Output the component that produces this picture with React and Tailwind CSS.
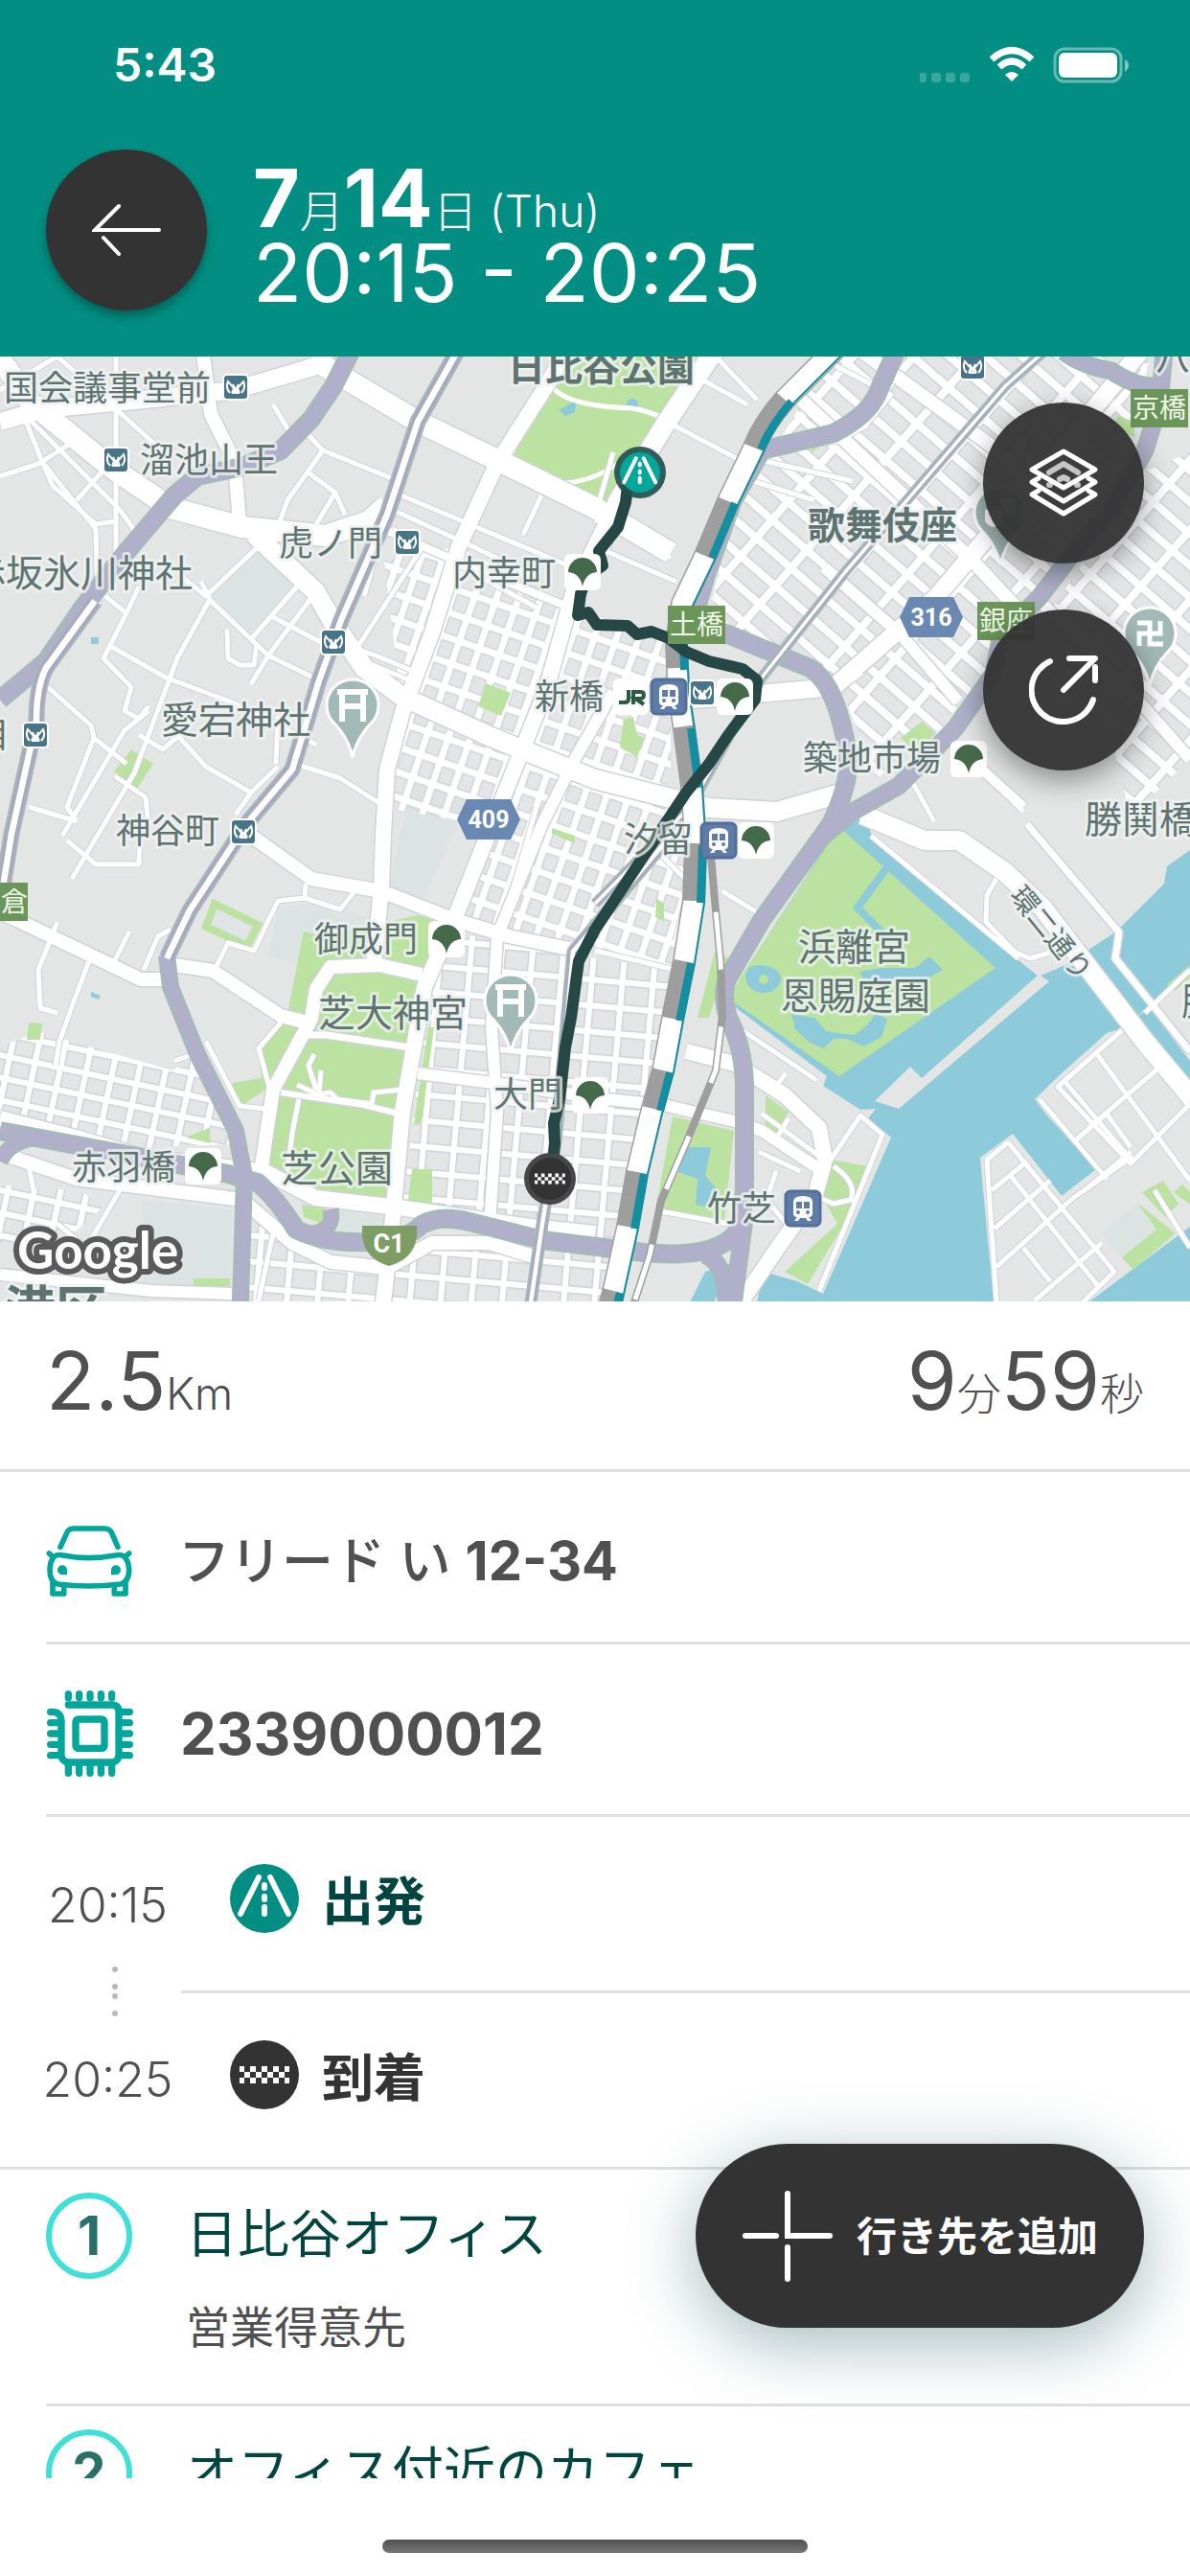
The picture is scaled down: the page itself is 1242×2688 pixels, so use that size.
import clsx from 'clsx';

const LAND_BLOCKS = [
  'M273 198 L312 240 L260 290 L222 250Z',
  'M430 440 L490 462 L440 570 L405 560Z',
  'M290 575 L330 570 L400 590 L320 640 L280 625Z',
  'M148 880 L242 890 V970 H150Z',
  'M351 891 L412 898 V925 L352 920Z',
  'M1187 883 L1207 911 L1171 940 L1150 915Z',
];

const WATER = [
  'M877 488 L906 488 L911 503 L1063 630 L1084 647 L1112 635 L1165 600 L1215 550 L1218 532 L1242 515 V640 L1191 685 L1171 701 L1155 706 L1108 748 L1080 775 L1092 791 L1144 848 L1108 876 L1057 811 L1023 836 L1037 987 H790 L797 955 L832 965 L859 978 L930 815 L906 795 L914 785 L898 786 L859 761 L863 751 L762 675 L771 651Z',
  'M1185 690 L1200 680 L1242 735 V765Z',
  'M1242 908 L1136 987 H1242Z',
  'M736 955 L764 946 L745 987 H720Z',
  'M880 488 L893 482 L905 485 V500 L890 505Z',
];

const PARKS = [
  'M570 32 L620 -2 H733 L691 68 L633 155 L535 106Z',
  'M507 341 L533 351 L523 375 L499 365Z',
  'M137 410 L160 425 L143 451 L119 433Z',
  'M317 600 L337 605 L436 583 L460 590 L440 645 L420 775 L412 871 L400 878 L329 868 L273 841 L277 765 L250 783 L242 758 L273 753 L269 718 L293 695 L301 681Z',
  'M430 848 H451 V888 H425Z',
  'M447 700 H453 L440 800 H432Z',
  'M194 815 L218 805 L220 821Z',
  'M30 695 L44 696 L42 713 H28Z',
  'M315 885 L341 888 L337 905 L317 898Z',
  'M876 491 L1039 638 L876 751 L762 671 L771 651Z',
  'M702 793 L766 808 L756 901 L684 891Z',
  'M746 621 L760 628 L740 690 H728Z',
  'M799 771 L823 788 L811 810 L799 806Z',
  'M867 838 L906 845 L890 890 L843 968 L819 955 L874 905 L859 878Z',
  'M1187 883 L1227 915 L1183 953 L1171 940 L1207 911Z',
  'M1225 872 L1234 864 L1242 872 V885Z',
  'M1192 872 L1214 860 L1230 884 L1216 898Z',
  'M1218 655 L1242 635 V648 L1226 662Z',
  'M847 88 L866 84 L847 101Z',
  'M651 378 L661 376 L665 395 L672 398 L665 418 L647 408Z',
  'M940 398 L962 381 L976 393 L958 415Z',
  'M576 492 L600 500 V508 L576 498Z',
  'M685 565 L693 571 L693 590 L684 585Z',
  'M202 962 H240 V970 H202Z',
  'M1166 62 L1184 68 V84 L1162 76Z',
  'M341 -2 H352 L346 10Z',
];

const PONDS = [
  'M778 648 Q778 634 795 635 Q815 638 815 650 Q812 664 795 664 Q780 662 778 648Z',
  'M826 686 L850 690 L862 704 L874 706 L892 708 L905 698 L915 684 L926 692 L920 710 L902 720 L884 712 L870 712 L860 722 L845 716 L830 702Z',
  'M897 642 L920 638 L955 638 L970 626 L984 640 L966 650 L940 648 L922 656 L900 648Z',
  'M716 825 H742 L736 855 L750 871 L740 888 L726 885 L728 858 L708 851Z',
  'M583 56 L602 45 L600 58 L590 62Z',
  'M654 50 a6 6 0 1 0 12 0 a6 6 0 1 0 -12 0Z',
  'M95 293 h8 v7 h-8Z',
  'M95 663 l10 4 -2 4 -8 -3Z',
];

// Blocks of regular streets, each filled with a rotated street pattern
const GRIDS = [
  { fill: 'url(#streets-ginza)', d: 'M830 60 L872 -2 H1200 L1180 100 L1100 240 L1035 320 L980 390 L915 440 L875 340 L795 300 L740 270 L760 180Z' },
  { fill: 'url(#streets-ginza)', d: 'M1100 260 L1195 120 L1242 100 V420 L1180 480 L1160 400 L1120 340Z' },
  { fill: 'url(#streets-shimbashi)', d: 'M400 205 L480 200 L621 270 L700 300 L700 440 L600 620 L530 605 L470 580 L510 490 L400 470 L420 371Z' },
  { fill: 'url(#streets-shimbashi)', d: 'M640 440 L720 470 L725 560 L700 640 L600 620Z' },
  { fill: 'url(#streets-daimon)', d: 'M600 625 L705 640 L670 850 L640 987 H252 L260 885 L345 950 L400 930 L580 930 L420 890 L455 600 L594 618Z' },
  { fill: 'url(#streets-azabu)', d: 'M0 720 L40 705 L180 745 L205 730 L245 822 L150 825 L0 785Z' },
  { fill: 'url(#streets-azabu)', d: 'M0 865 L80 870 L110 885 L60 930 L0 925Z' },
];

const MINOR_ROADS = [
  'M121 -2 V230', 'M22 55 L44 110 L100 180 L102 260', 'M30 65 L125 160 L150 195', 'M0 125 L40 112 L75 90',
  'M45 112 L55 135 L100 175 L120 172', 'M0 15 L40 60 M0 35 L60 0', 'M60 0 L160 90', 'M80 150 L120 105',
  'M285 50 L306 85 L320 75 M320 80 L337 98 L411 128', 'M337 98 L300 150 L290 178', 'M320 120 L350 142 L330 175',
  'M350 142 L360 165', 'M419 145 L490 175 L621 230', 'M414 162 L480 192 L560 230', 'M410 180 L560 262',
  'M565 145 L546 186', 'M273 195 L215 250 L190 230', 'M210 235 L220 255 L262 295 L280 312 L333 338', 'M218 255 L185 315 L140 435 L75 545',
  'M310 240 L262 295', 'M110 250 L132 268 L145 240', 'M132 268 L108 315 L137 345 L130 370 L145 378 L155 365', 'M115 302 L173 335 L240 360 L330 405',
  'M262 342 L280 312 L330 245', 'M285 272 L348 305', 'M50 345 L95 385 L98 398 L132 425', 'M65 500 L130 390 L155 370',
  'M98 398 L70 470 L80 485', 'M30 470 L80 485', 'M185 395 L215 428 L262 455 L290 428', 'M120 438 L152 460 L155 490',
  'M145 395 L170 410 L185 397', 'M237 285 L238 315 L250 322 L265 322 L268 300', 'M308 425 L355 440 L402 470', 'M348 305 L433 340 M372 305 L392 312 L433 329',
  'M405 160 L380 250', 'M440 200 L372 305', 'M290 375 L288 425 M262 455 L246 478', 'M70 505 L100 530 L145 530 L146 500',
  'M319 550 L318 565 L290 568 L265 620 L238 612 L224 640', 'M318 565 L355 577 L370 558', 'M93 631 L78 670 L62 715 L58 740',
  'M60 590 L40 640 L42 680 L60 685', 'M120 630 L135 600 M150 640 L165 605 L178 598', 'M215 715 L250 782 L277 785',
  'M293 695 L270 722 L283 770', 'M182 735 L205 727', 'M560 470 L520 610', 'M621 170 L700 210 M625 200 L706 235 M640 100 L620 170',
  'M696 68 L772 108', 'M725 20 L780 50 M745 -2 L790 45', 'M787 101 L874 88 L906 71', 'M850 -2 L930 40 L905 70',
  'M780 105 L890 130 M770 125 L850 150', 'M985 391 L1068 475', 'M920 450 L950 440 L975 485', 'M795 345 L874 348 L900 330',
  'M1040 545 L1030 562 L1029 590 L1060 622 L1075 628 L1096 622', 'M909 500 L1063 628', 'M754 558 L790 580', 'M670 500 L720 550 L705 610',
  'M621 620 L705 640', 'M1195 685 L1242 640', 'M1171 703 L1104 762 L1180 842 L1242 780', 'M1145 728 L1242 860', 'M1110 755 L1182 840',
  'M1136 805 L1210 742', 'M1120 820 L1155 790 L1180 825', 'M1085 775 L1155 858', 'M1242 930 L1205 870 M1135 868 L1180 830',
  'M1052 820 L1030 838 L1040 987', 'M1052 820 L1163 955 L1130 987', 'M1035 870 L1072 840', 'M1038 910 L1096 860',
  'M1040 950 L1120 878 L1182 835', 'M1080 985 L1150 925', 'M1055 855 L1146 970', 'M1068 930 L1096 965',
  'M867 838 L898 792 L921 812 L855 975', 'M870 845 Q895 862 888 880 L870 884 L850 876', 'M860 838 L795 790',
  'M770 700 L852 755 M811 760 L820 748', 'M792 830 L835 850 M823 795 L811 815', 'M810 850 L800 880 L825 910 L815 930', 'M684 891 L760 905',
  'M255 885 L250 905 M285 915 L270 985', 'M30 845 L35 870 M60 905 L90 930 L125 870', 'M310 760 L332 770 L345 768 L352 775 L388 780 L390 768 L420 765',
  'M328 728 L322 740 L330 765 M335 745 L333 768', 'M312 775 L305 810 L300 850',
];

const MAIN_ROADS = [
  { w: 18, d: 'M0 68 L45 55 L150 45 L245 35 L330 10 L340 -5' },
  { w: 22, d: 'M-5 -5 L32 48 L115 115 L178 158 L253 178 L340 187 L385 172 L404 155' },
  { w: 14, d: 'M212 -2 L220 60 L245 110 L250 175' },
  { w: 22, d: 'M325 2 L436 68 L519 108 L621 158 L700 205' },
  { w: 8, d: 'M400 180 L480 215 L590 260' },
  { w: 20, d: 'M265 185 L329 245 L348 278 L380 325 L420 355 L515 398 L621 441 L740 471 L811 475 L880 455' },
  { w: 16, d: 'M590 -5 L570 31 L519 111 L479 198 L451 288 L420 371 L404 431 L400 498 L398 555 L390 635' },
  { w: 16, d: 'M640 160 L600 240 L570 348 L527 455 L507 505 L475 585 L443 658 L420 788 L410 898 L400 987' },
  { w: 12, d: 'M640 350 L600 420 L566 488 L519 605 L513 700 L519 788 L511 905' },
  { w: 14, d: 'M262 500 L325 545 L398 558 L475 588 L531 605 L594 618' },
  { w: 14, d: 'M0 580 L24 591 L147 650 L170 650 L182 635 L222 641 L293 688 L321 695' },
  { w: 16, d: 'M0 795 L79 815 L147 835 L253 848 L277 851 L329 878 L416 888 L554 908 L621 915' },
  { w: 14, d: 'M0 831 L79 858 L253 880 L305 925 L345 945 L404 951 L451 925 L511 925 L562 941' },
  { w: 14, d: 'M440 645 L396 635 L345 637 L330 660 L325 691 L285 765 L273 845' },
  { w: 7, d: 'M321 708 L341 708 L428 721' },
  { w: 6, d: 'M293 768 L380 781 L420 791' },
  { w: 12, d: 'M436 748 L515 758 L633 775 L692 781 L767 798 L795 808 L855 848' },
  { w: 16, d: 'M716 725 L767 738 L819 771 L855 805 L861 838 L851 875 L811 931 L771 990' },
  { w: 20, d: 'M900 478 L965 505 L1001 505 L1049 538 L1088 575 L1136 638 L1195 715 L1245 775' },
  { w: 7, d: 'M1072 488 L1168 601 L1164 628 L1242 725' },
  { w: 12, d: 'M0 958 L158 975 L242 978' },
  { w: 20, d: 'M745 -5 L696 68 L645 151 L622 210' },
  { w: 14, d: 'M820 30 L882 88 L1017 215 L1068 270' },
  { w: 14, d: 'M900 -5 L1041 98 L1120 190' },
  { w: 18, d: 'M700 360 L870 345 L977 251 L1080 130 L1190 -5' },
  { w: 12, d: 'M860 220 L940 290 L1000 360' },
  { w: 12, d: 'M1080 250 L1180 350 L1242 420' },
  { w: 10, d: 'M980 390 L1068 470' },
];

// Expressways are solid, underground lines carry a white core
const EXPRESSWAYS = [
  { w: 15, d: 'M366 -5 L348 31 L325 65 L293 98 L253 115 L206 125 L182 145 L131 205 L87 261 L48 318 L0 358' },
  { w: 15, d: 'M0 808 L91 825 L238 853 L269 862 Q290 880 309 911 Q340 926 385 924 Q425 922 440 906 Q460 895 490 903 L566 922 L672 935 Q745 942 768 915 Q777 895 777 860 L777 760 Q776 720 760 690 Q752 665 760 648 L795 588 L867 488 Q890 440 884 410 Q872 340 845 325 L760 290 L722 280 L737 228 L765 150 L795 98 L870 80 Q905 62 915 40 L935 -5' },
  { w: 14, d: 'M860 500 L890 475 L938 448 L997 388 L1037 331 L1045 290 L1085 251 L1120 205 L1160 160 L1195 98 L1210 50 L1215 -5' },
  { w: 12, d: 'M0 840 Q10 818 40 815' },
  { w: 12, d: 'M345 890 Q350 912 325 915' },
  { w: 14, d: 'M1110 -5 Q1130 10 1160 15 Q1190 35 1212 30' },
  { w: 14, d: 'M735 937 Q758 945 758 990 M777 900 L765 990' },
  { w: 13, d: 'M174 625 L178 658 L206 728 L246 808 L255 855 L251 987' },
];

const SUBWAYS = [
  { w: 13, d: 'M99 255 L48 325 Q38 345 38 380 L12 498 L2 560' },
  { w: 13, d: 'M477 -5 L436 68 L404 165 L356 275 L333 338 L305 431 L257 488 L198 578 L174 628' },
  { w: 7, d: 'M1095 -10 L1049 31 L882 225 L795 335 L720 470 L621 571' },
  { w: 9, d: 'M700 500 L598 621 L580 820 L566 905 L554 987' },
];

const MAIN_LINE = 'M872 -8 L819 45 Q797 70 787 95 L760 151 L736 208 L712 258 L706 298 L708 348 L714 388 L722 448 L726 511 L724 568 L714 631 L702 691 L692 745 L680 788 L665 851 L655 908 L637 990';
const MAIN_LINE_DARK = 'M819 45 Q797 70 787 95 M760 151 L736 208 M706 298 L707 325 M714 386 L722 448 M726 508 L724 568 M714 631 L702 691 M692 745 L682 785 M665 851 L655 908 M640 975 L636 990';
const MONORAIL = 'M742 520 L746 568 L752 631 L754 688 L747 745 L716 821 L690 881 L678 938 L661 990';
const ROUTE = 'M655 135 L653 152 L645 178 L625 203 L629 218 L612 230 L606 248 L603 270 L614 267 L623 280 L655 281 L665 290 L680 287 L698 294 L716 308 L740 318 L775 326 L790 338 L788 358 L760 395 L740 425 L716 455 L692 491 L621 598 L604 631 L596 690 L590 721 L584 775 L578 800 L579 821 L576 850';

const LABELS = [
  { t: '国会議事堂前', x: 4, y: 46 },
  { t: '溜池山王', x: 146, y: 121 },
  { t: '虎ノ門', x: 291, y: 208 },
  { t: '赤坂氷川神社', x: -33, y: 240, lg: true },
  { t: '内幸町', x: 472, y: 239 },
  { t: '愛宕神社', x: 168, y: 393, lg: true },
  { t: '目', x: -26, y: 408 },
  { t: '新橋', x: 558, y: 368 },
  { t: '神谷町', x: 121, y: 508 },
  { t: '日比谷公園', x: 530, y: 25, lg: true, bold: true },
  { t: '歌舞伎座', x: 843, y: 190, lg: true, bold: true },
  { t: '八', x: 1206, y: 14 },
  { t: '築地市場', x: 838, y: 432 },
  { t: '汐留', x: 651, y: 517 },
  { t: '勝鬨橋', x: 1132, y: 497, lg: true },
  { t: '勝', x: 1233, y: 687, lg: true },
  { t: '御成門', x: 328, y: 621 },
  { t: '芝大神宮', x: 332, y: 699, lg: true },
  { t: '大門', x: 515, y: 783 },
  { t: '赤羽橋', x: 75, y: 859 },
  { t: '芝公園', x: 293, y: 861, lg: true },
  { t: '浜離宮', x: 833, y: 630, lg: true },
  { t: '恩賜庭園', x: 815, y: 681, lg: true },
  { t: '竹芝', x: 738, y: 902 },
];

const METRO_STOPS = [[246, 32], [121, 108], [425, 194], [348, 298], [37, 395], [254, 496], [733, 351], [1015, 11]];
const TRAIN_STOPS = [[698, 355], [750, 505], [838, 889]];
const TOEI_STOPS = [[608, 225], [767, 355], [1011, 420], [789, 505], [466, 608], [616, 771], [212, 845]];

const RAMPS = [
  { t: '京橋', x: 1180, y: 34 },
  { t: '銀座', x: 1020, y: 256 },
  { t: '土橋', x: 697, y: 260 },
  { t: '倉', x: -1, y: 549, w: 30 },
];

const MetroStop = ({ x, y }) => (
  <g transform={`translate(${x} ${y})`}>
    <rect x="-14" y="-14" width="28" height="28" rx="5" fill="#fff" />
    <rect x="-12" y="-12" width="24" height="24" rx="3" fill="#477487" />
    <path
      d="M-6 6 Q-11 1 -8 -6 L-2 1 L-4 6 M6 6 Q11 1 8 -6 L2 1 L4 6 M-3 -3 Q0 4 4 6 H-4 Q0 4 3 -3"
      fill="none"
      stroke="#fff"
      strokeWidth="2"
    />
  </g>
);

const TrainStop = ({ x, y }) => (
  <g transform={`translate(${x} ${y})`}>
    <rect x="-18" y="-18" width="36" height="36" rx="5" fill="#5f7ca6" stroke="#536f9b" strokeWidth="3" />
    <path d="M-10 -7 Q-10 -13 0 -13 Q10 -13 10 -7 V5 Q10 9 6 9 L9 13 H5 L3 10 H-3 L-5 13 H-9 L-6 9 Q-10 9 -10 5Z" fill="#fff" />
    <path d="M-7 -7 H-1 V0 H-7Z M1 -7 H7 V0 H1Z" fill="#5f7ca6" />
    <circle cx="-5" cy="4" r="2" fill="#5f7ca6" />
    <circle cx="5" cy="4" r="2" fill="#5f7ca6" />
  </g>
);

const ToeiStop = ({ x, y }) => (
  <g transform={`translate(${x} ${y})`}>
    <rect x="-19" y="-19" width="38" height="38" rx="6" fill="#fff" />
    <path d="M-15 0 A15 15 0 0 1 15 0 Q3 1 0 15 Q-3 1 -15 0Z" fill="#456a4a" />
  </g>
);

const PlacePin = ({ x, y, children }) => (
  <g transform={`translate(${x} ${y})`}>
    <path
      d="M0 55 Q-4 36 -18 21 A27 27 0 1 1 18 21 Q4 36 0 55Z"
      fill="#a2bab7"
      stroke="#fff"
      strokeWidth="3"
    />
    {children}
  </g>
);

const Torii = () => (
  <path d="M-16 -13 H16 M-11 -13 V18 M11 -13 V18 M-11 2 H11" fill="none" stroke="#fff" strokeWidth="6" />
);

const RoadGlyph = () => (
  <path
    d="M30 14 L11 52 M42 14 L61 52 M36 22 V25 M36 34 V37 M36 45 V52"
    fill="none"
    stroke="#fff"
    strokeWidth="6"
    strokeLinecap="round"
  />
);

const FlagGlyph = () => (
  <path
    d="M10 27h5v6h-5z M21 27h6v6h-6z M33 27h6v6h-6z M45 27h6v6h-6z M57 27h5v6h-5z M15 33h6v6h-6z M27 33h6v6h-6z M39 33h6v6h-6z M51 33h6v6h-6z M10 39h5v6h-5z M21 39h6v6h-6z M33 39h6v6h-6z M45 39h6v6h-6z M57 39h5v6h-5z"
    fill="#fff"
  />
);

const StreetPattern = ({ id, w, h, angle, line }) => (
  <pattern id={id} width={w} height={h} patternUnits="userSpaceOnUse" patternTransform={`rotate(${angle})`}>
    <path d={`M0 0 H${w} M0 0 V${h} M0 ${h} H${w} M${w} 0 V${h}`} stroke="#d0d2da" strokeWidth={line + 3} />
    <path d={`M0 0 H${w} M0 0 V${h} M0 ${h} H${w} M${w} 0 V${h}`} stroke="#fff" strokeWidth={line} />
  </pattern>
);

const RouteMap = () => (
  <svg
    className="block w-full h-full font-['Noto_Sans_CJK_JP','Noto_Sans',sans-serif]"
    viewBox="0 0 1242 986"
    preserveAspectRatio="xMidYMid slice"
    role="img"
    aria-label="走行ルート"
  >
    <defs>
      <StreetPattern id="streets-ginza" w={48} h={25} angle={41} line={8} />
      <StreetPattern id="streets-shimbashi" w={22} h={25} angle={19} line={7} />
      <StreetPattern id="streets-daimon" w={32} h={27} angle={5} line={6} />
      <StreetPattern id="streets-azabu" w={27} h={23} angle={12} line={6} />
    </defs>

    <rect width="1242" height="986" fill="#e4e6e6" />
    {LAND_BLOCKS.map((d) => <path key={d} d={d} fill="#dce3e3" />)}
    {WATER.map((d) => <path key={d} d={d} fill="#8ecbda" />)}
    <path d="M1084 645 L1095 652 L938 785 L913 777 L950 741 L962 753Z" fill="#e4e6e6" />
    {GRIDS.map(({ fill, d }) => <path key={d} d={d} fill={fill} />)}
    {PARKS.map((d) => <path key={d} d={d} fill="#bbe2a0" />)}
    <path d="M224 571 L269 593 L258 615 L215 595Z" fill="#e0e4e6" stroke="#bbe2a0" strokeWidth="8" />
    {PONDS.map((d) => <path key={d} d={d} fill="#8ecbda" />)}
    <circle cx="797" cy="650" r="5" fill="#bbe2a0" />
    <path d="M926 533 L895 575 L926 607" fill="none" stroke="#8ecbda" strokeWidth="8" />
    <path d="M575 30 Q590 52 660 54 Q690 60 700 70 M580 131 Q610 135 645 112" fill="none" stroke="#fff" strokeWidth="5" />

    <g fill="none" strokeLinejoin="round">
      {MINOR_ROADS.map((d) => <path key={d} d={d} stroke="#d0d2da" strokeWidth="7" />)}
      {MAIN_ROADS.map(({ w, d }) => <path key={d} d={d} stroke="#d0d2da" strokeWidth={w + 3} />)}
      {MINOR_ROADS.map((d) => <path key={d} d={d} stroke="#fff" strokeWidth="5" />)}
      {MAIN_ROADS.map(({ w, d }) => <path key={d} d={d} stroke="#fff" strokeWidth={w} />)}

      {EXPRESSWAYS.map(({ w, d }) => <path key={d} d={d} stroke="#a5bab8" strokeWidth={w + 5} />)}
      {EXPRESSWAYS.map(({ w, d }) => <path key={d} d={d} stroke="#b0b0ca" strokeWidth={w} />)}
      {SUBWAYS.map(({ w, d }) => <path key={d} d={d} stroke="#a5bab8" strokeWidth={w + 4} />)}
      {SUBWAYS.map(({ w, d }) => <path key={d} d={d} stroke="#a9a8c0" strokeWidth={w} />)}
      {SUBWAYS.map(({ w, d }) => <path key={d} d={d} stroke="#fff" strokeWidth={w / 2} />)}

      <path d={MONORAIL} stroke="#9e9e9e" strokeWidth="8" />
      <path d={MONORAIL} stroke="#fff" strokeWidth="5" strokeDasharray="60 60" strokeDashoffset="60" />
      <path d={MAIN_LINE} stroke="#9e9e9e" strokeWidth="24" />
      <path d={MAIN_LINE} stroke="#fff" strokeWidth="21" />
      <path d={MAIN_LINE_DARK} stroke="#9e9e9e" strokeWidth="23" />
      <g transform="translate(7 2)">
        <path d={MAIN_LINE} stroke="#148ea0" strokeWidth="2" transform="translate(4 0)" />
        <path d={MAIN_LINE_DARK} stroke="#148ea0" strokeWidth="8" />
      </g>
    </g>

    <path d={ROUTE} fill="none" stroke="#254846" strokeWidth="12" strokeLinejoin="round" />

    <g fill="#5f7370" stroke="#eef2f1" strokeWidth="6" strokeOpacity="0.8" strokeLinejoin="round" paintOrder="stroke">
      {LABELS.map(({ t, x, y, lg, bold }) => (
        <text key={t + x} x={x} y={y} fontSize={lg ? 39 : 36} fontWeight={bold ? 700 : 400}>{t}</text>
      ))}
      <text x="4" y="1015" fontSize="54" fontWeight="700">港区</text>
      <text fontSize="29" textAnchor="middle" transform="translate(1089 608) rotate(51)">環二通り</text>
    </g>

    {METRO_STOPS.map(([x, y]) => <MetroStop key={`${x}-${y}`} x={x} y={y} />)}
    <rect x="640" y="336" width="37" height="38" rx="6" fill="#fff" />
    <path
      d="M656 348 V357 Q656 361 652 361 H646 M661 363 V350 H668 Q672 350 672 353 Q672 357 668 357 H663 L672 363"
      fill="none"
      stroke="#2c5a45"
      strokeWidth="4"
    />
    {TRAIN_STOPS.map(([x, y]) => <TrainStop key={`${x}-${y}`} x={x} y={y} />)}
    {TOEI_STOPS.map(([x, y]) => <ToeiStop key={`${x}-${y}`} x={x} y={y} />)}

    <PlacePin x={368} y={363}><Torii /></PlacePin>
    <PlacePin x={533} y={671}><Torii /></PlacePin>
    <PlacePin x={1200} y={288}>
      <path d="M-13 -10 H0 V12 H14 M-11 14 V1 H11 V-12" fill="none" stroke="#fff" strokeWidth="5" />
    </PlacePin>
    <PlacePin x={1044} y={162}>
      <path d="M-16 -2 H2 V10 Q-7 22 -16 10Z M0 -14 H16 V0 Q10 6 4 0" fill="#fff" />
    </PlacePin>

    {RAMPS.map(({ t, x, y, w = 60 }) => (
      <g key={t}>
        <rect x={x} y={y} width={w} height="40" fill="#6b9559" />
        <text x={x + 2} y={y + 30} fontSize="28" fill="#eef7e8">{t}</text>
      </g>
    ))}

    <g className="font-['Roboto',sans-serif]" fill="#fff" fontSize="27" fontWeight="700" textAnchor="middle">
      <path d="M487 462 H533 L543 483 L533 504 H487 L477 483Z" fill="#6a89b2" />
      <text x="510" y="492" fontSize="25">409</text>
      <path d="M949 251 H995 L1005 272 L995 293 H949 L939 272Z" fill="#6a89b2" />
      <text x="972" y="281" fontSize="25">316</text>
      <path d="M378 907 H435 V918 Q432 942 406 949 Q381 942 378 918Z" fill="#7c9d63" />
      <text x="406" y="935">C1</text>
    </g>

    <circle cx="668" cy="121" r="27" fill="#244f4d" fillOpacity="0.92" />
    <circle cx="668" cy="121" r="21" fill="#00a79a" />
    <g transform="translate(644 97) scale(0.66)"><RoadGlyph /></g>
    <circle cx="574" cy="858" r="27" fill="#474747" />
    <circle cx="574" cy="858" r="22" fill="#333" />
    <g transform="translate(552 836) scale(0.61)"><FlagGlyph /></g>

    <text
      className="font-['Lato',sans-serif]"
      x="18"
      y="952"
      fontSize="53"
      fontWeight="700"
      fill="#fff"
      stroke="#5a5a5a"
      strokeWidth="12"
      strokeLinejoin="round"
      paintOrder="stroke"
    >
      Google
    </text>
  </svg>
);

const StatusBar = () => (
  <div className="flex items-center justify-between h-[136px] pl-[118px] pr-15">
    <span className="text-5xl font-semibold">5:43</span>
    <svg className="w-[222px] h-10" viewBox="0 0 222 40" fill="#fff" aria-hidden="true">
      <g opacity="0.22">
        <rect x="-3" y="28" width="10" height="10" rx="3" />
        <rect x="12" y="28" width="10" height="10" rx="3" />
        <rect x="27" y="28" width="10" height="10" rx="3" />
        <rect x="42" y="28" width="10" height="10" rx="3" />
      </g>
      <path d="M96 37 L89 30 Q96 24 103 30Z" />
      <path d="M83 22 Q96 10 109 22 M75 14 Q96 -5 117 14" fill="none" stroke="#fff" strokeWidth="7" />
      <rect x="141" y="3" width="69" height="34" rx="10" fill="none" stroke="#fff" strokeWidth="3" opacity="0.4" />
      <rect x="145" y="7" width="61" height="26" rx="6" />
      <path d="M214 14 Q218 16 218 20 Q218 24 214 27Z" opacity="0.5" />
    </svg>
  </div>
);

const RoundButton = ({ label, className, children }) => (
  <button
    type="button"
    aria-label={label}
    className={clsx('flex shrink-0 items-center justify-center size-[168px] rounded-full', className)}
  >
    {children}
  </button>
);

const Header = () => (
  <header className="shrink-0 bg-[#028e82] text-white">
    <StatusBar />
    <div className="flex items-start px-12 pt-5 pb-12">
      <RoundButton label="戻る" className="bg-[#333] shadow-[0_6px_10px_rgba(0,0,0,0.3)]">
        <svg className="w-[72px] h-[58px]" viewBox="0 0 72 58" fill="none" stroke="#fff" strokeWidth="4" strokeLinecap="round">
          <path d="M70 29 H3 L28 4 M12 37 L28 54" />
        </svg>
      </RoundButton>
      <h1 className="pl-12 pt-3">
        <span className="flex items-baseline h-[78px] text-[46px] leading-[78px] font-light">
          <b className="text-[84px] font-bold">7</b>月
          <b className="text-[84px] font-bold">14</b>日 (Thu)
        </span>
        <span className="block h-[78px] text-[84px] leading-[78px] font-normal">20:15 - 20:25</span>
      </h1>
    </div>
  </header>
);

const MapSection = () => (
  <section className="relative w-full shrink-0 aspect-[1242/986] overflow-hidden">
    <RouteMap />
    <div className="absolute top-12 right-12 flex flex-col gap-12">
      <RoundButton label="地図の種類" className="bg-[#333]/95 shadow-[0_10px_30px_rgba(0,0,0,0.4)]">
        <svg className="size-[72px]" viewBox="0 0 72 72" fill="none" strokeLinecap="round" strokeLinejoin="round">
          <g stroke="#c6c6c6" strokeWidth="6">
            <path d="M21 25 L36 16 L51 25 M32 32 L36 30 L40 32 M21 38 L22 38 M50 38 L51 38" />
          </g>
          <g stroke="#fff" strokeWidth="5">
            <path d="M36 3 L69 22 L36 41 L3 22Z" />
            <path d="M10 31 L3 35 L36 55 L69 35 L62 31" />
            <path d="M10 44 L3 48 L36 68 L69 48 L62 44" />
          </g>
        </svg>
      </RoundButton>
      <RoundButton label="共有" className="bg-[#333]/95 shadow-[0_10px_30px_rgba(0,0,0,0.4)]">
        <svg className="size-[72px]" viewBox="0 0 72 72" fill="none" stroke="#fff" strokeWidth="6" strokeLinecap="round" strokeLinejoin="round">
          <path d="M22 6 A33 33 0 1 0 67 46 M36 36 L69 3 H42 M69 12 V26" />
        </svg>
      </RoundButton>
    </div>
  </section>
);

const CarIcon = () => (
  <svg className="w-[90px] h-[78px]" viewBox="24 45 270 234" fill="none" stroke="#00a79a" strokeWidth="17" strokeLinecap="round" strokeLinejoin="round">
    <path d="M69 118 L88 76 Q94 60 110 60 H208 Q224 60 231 76 L249 118" />
    <path d="M34 138 L44 147 M284 138 L274 147" />
    <path d="M50 147 Q60 140 78 144 Q158 160 240 144 Q258 140 268 147 Q284 162 284 190 Q284 226 258 234 Q158 246 60 234 Q36 226 36 190 Q36 162 50 147Z" />
    <path d="M45 232 V264 H80 V240 M238 240 V264 H273 V232" />
    <path d="M90 205 H75 A15 15 0 1 1 90 190Z M228 205 H243 A15 15 0 1 0 228 190Z" fill="#00a79a" stroke="none" />
  </svg>
);

const ChipIcon = () => (
  <svg className="size-[92px]" viewBox="24 564 276 276" fill="none" stroke="#00a79a" strokeWidth="22" strokeLinecap="round" strokeLinejoin="round">
    <path d="M94 612 H232 Q252 614 252 634 V768 Q250 790 232 792 H95 Q74 790 72 770 V660 Q70 636 48 634 H38" />
    <path d="M94 578 V590 M128 578 V590 M162 578 V590 M196 578 V590 M230 578 V590" />
    <path d="M94 800 V826 M128 800 V826 M162 800 V826 M196 800 V826 M230 800 V826" />
    <path d="M260 634 H286 M260 668 H286 M260 702 H286 M260 736 H286 M260 770 H286" />
    <path d="M38 668 H64 M38 702 H64 M38 736 H64 M38 770 H64" />
    <rect x="117" y="657" width="90" height="91" rx="8" />
  </svg>
);

const InfoRow = ({ icon, children }) => (
  <li className="ml-12 flex items-center h-[180px] gap-12 pt-2 border-b-[3px] border-[#e0e0e0] text-[54px]">
    {icon}
    <span>{children}</span>
  </li>
);

const TripPoint = ({ time, title, color, titleColor, glyph, last }) => (
  <li className={clsx('flex items-stretch h-[184px]', last && 'border-b-[3px] border-[#e0e0e0]')}>
    <time className="flex w-[189px] items-center justify-center pl-10 pr-1 text-[50px] font-light">{time}</time>
    <div className={clsx('flex flex-1 items-center gap-6 pl-[51px] pb-3', !last && 'border-b-[3px] border-[#e0e0e0]')}>
      <svg className="size-[72px]" viewBox="0 0 72 72" aria-hidden="true">
        <circle cx="36" cy="36" r="36" fill={color} />
        {glyph}
      </svg>
      <span className={clsx('pt-2 text-[54px] font-bold', titleColor)}>{title}</span>
    </div>
  </li>
);

const Destination = ({ index, name, note }) => (
  <li className="ml-12 flex items-start gap-14 h-[247px] pt-6 border-b-[3px] border-[#e0e0e0]">
    <span className="flex shrink-0 items-center justify-center size-[90px] rounded-full border-[6px] border-[#40dfd8] text-[56px] font-bold text-[#2a706a]">
      {index}
    </span>
    <div className="pt-1">
      <p className="text-[54px] leading-20 text-[#00453f]">{name}</p>
      <p className="pt-4 text-[46px] leading-20">{note}</p>
    </div>
  </li>
);

const App = () => (
  <main className="relative flex flex-col h-screen overflow-hidden bg-white text-[#505050] font-['Inter','Noto_Sans_CJK_JP',sans-serif]">
    <Header />
    <MapSection />

    <div className="flex-1 min-h-0 overflow-hidden">
      <div className="flex items-baseline justify-between h-[178px] px-12 pt-5 border-b-[3px] border-[#e0e0e0] text-[46px] font-light">
        <p><span className="text-[84px] font-normal">2.5</span>Km</p>
        <p>
          <span className="text-[84px] font-normal">9</span>分
          <span className="text-[84px] font-normal">59</span>秒
        </p>
      </div>

      <ul>
        <InfoRow icon={<CarIcon />}>
          <span className="font-medium">フリード い</span> <b className="text-[56px]">12-34</b>
        </InfoRow>
        <InfoRow icon={<ChipIcon />}><b className="text-[60px]">2339000012</b></InfoRow>
      </ul>

      <ol className="relative">
        <TripPoint time="20:15" title="出発" color="#028e82" titleColor="text-[#00453f]" glyph={<RoadGlyph />} />
        <TripPoint time="20:25" title="到着" color="#333" titleColor="text-[#333]" glyph={<FlagGlyph />} last />
        <svg className="absolute left-[117px] top-[156px] w-[6px] h-[54px]" viewBox="0 0 6 54" fill="#b8b8b8" aria-hidden="true">
          <circle cx="3" cy="3" r="3" />
          <circle cx="3" cy="21" r="3" />
          <circle cx="3" cy="31" r="3" />
          <circle cx="3" cy="49" r="3" />
        </svg>
      </ol>

      <ol>
        <Destination index={1} name="日比谷オフィス" note="営業得意先" />
        <Destination index={2} name="オフィス付近のカフェ" />
      </ol>
    </div>

    <button
      type="button"
      className="absolute right-12 bottom-[259px] flex items-center gap-6 h-48 px-12 rounded-full bg-[#333] text-[42px] font-bold text-white shadow-[0_16px_72px_rgba(0,60,70,0.36)]"
    >
      <svg className="size-[96px]" viewBox="0 0 96 96" fill="none" stroke="#fff" strokeWidth="6" strokeLinecap="round">
        <path d="M48 4 V48 H92 M4 48 H36 M48 60 V93" />
      </svg>
      行き先を追加
    </button>

    <footer className="flex shrink-0 items-start justify-center h-[102px] pt-16 bg-white">
      <div className="w-[444px] h-[14px] rounded-full bg-linear-to-b from-[#505050] to-[#787878]" />
    </footer>
  </main>
);

export default App;
